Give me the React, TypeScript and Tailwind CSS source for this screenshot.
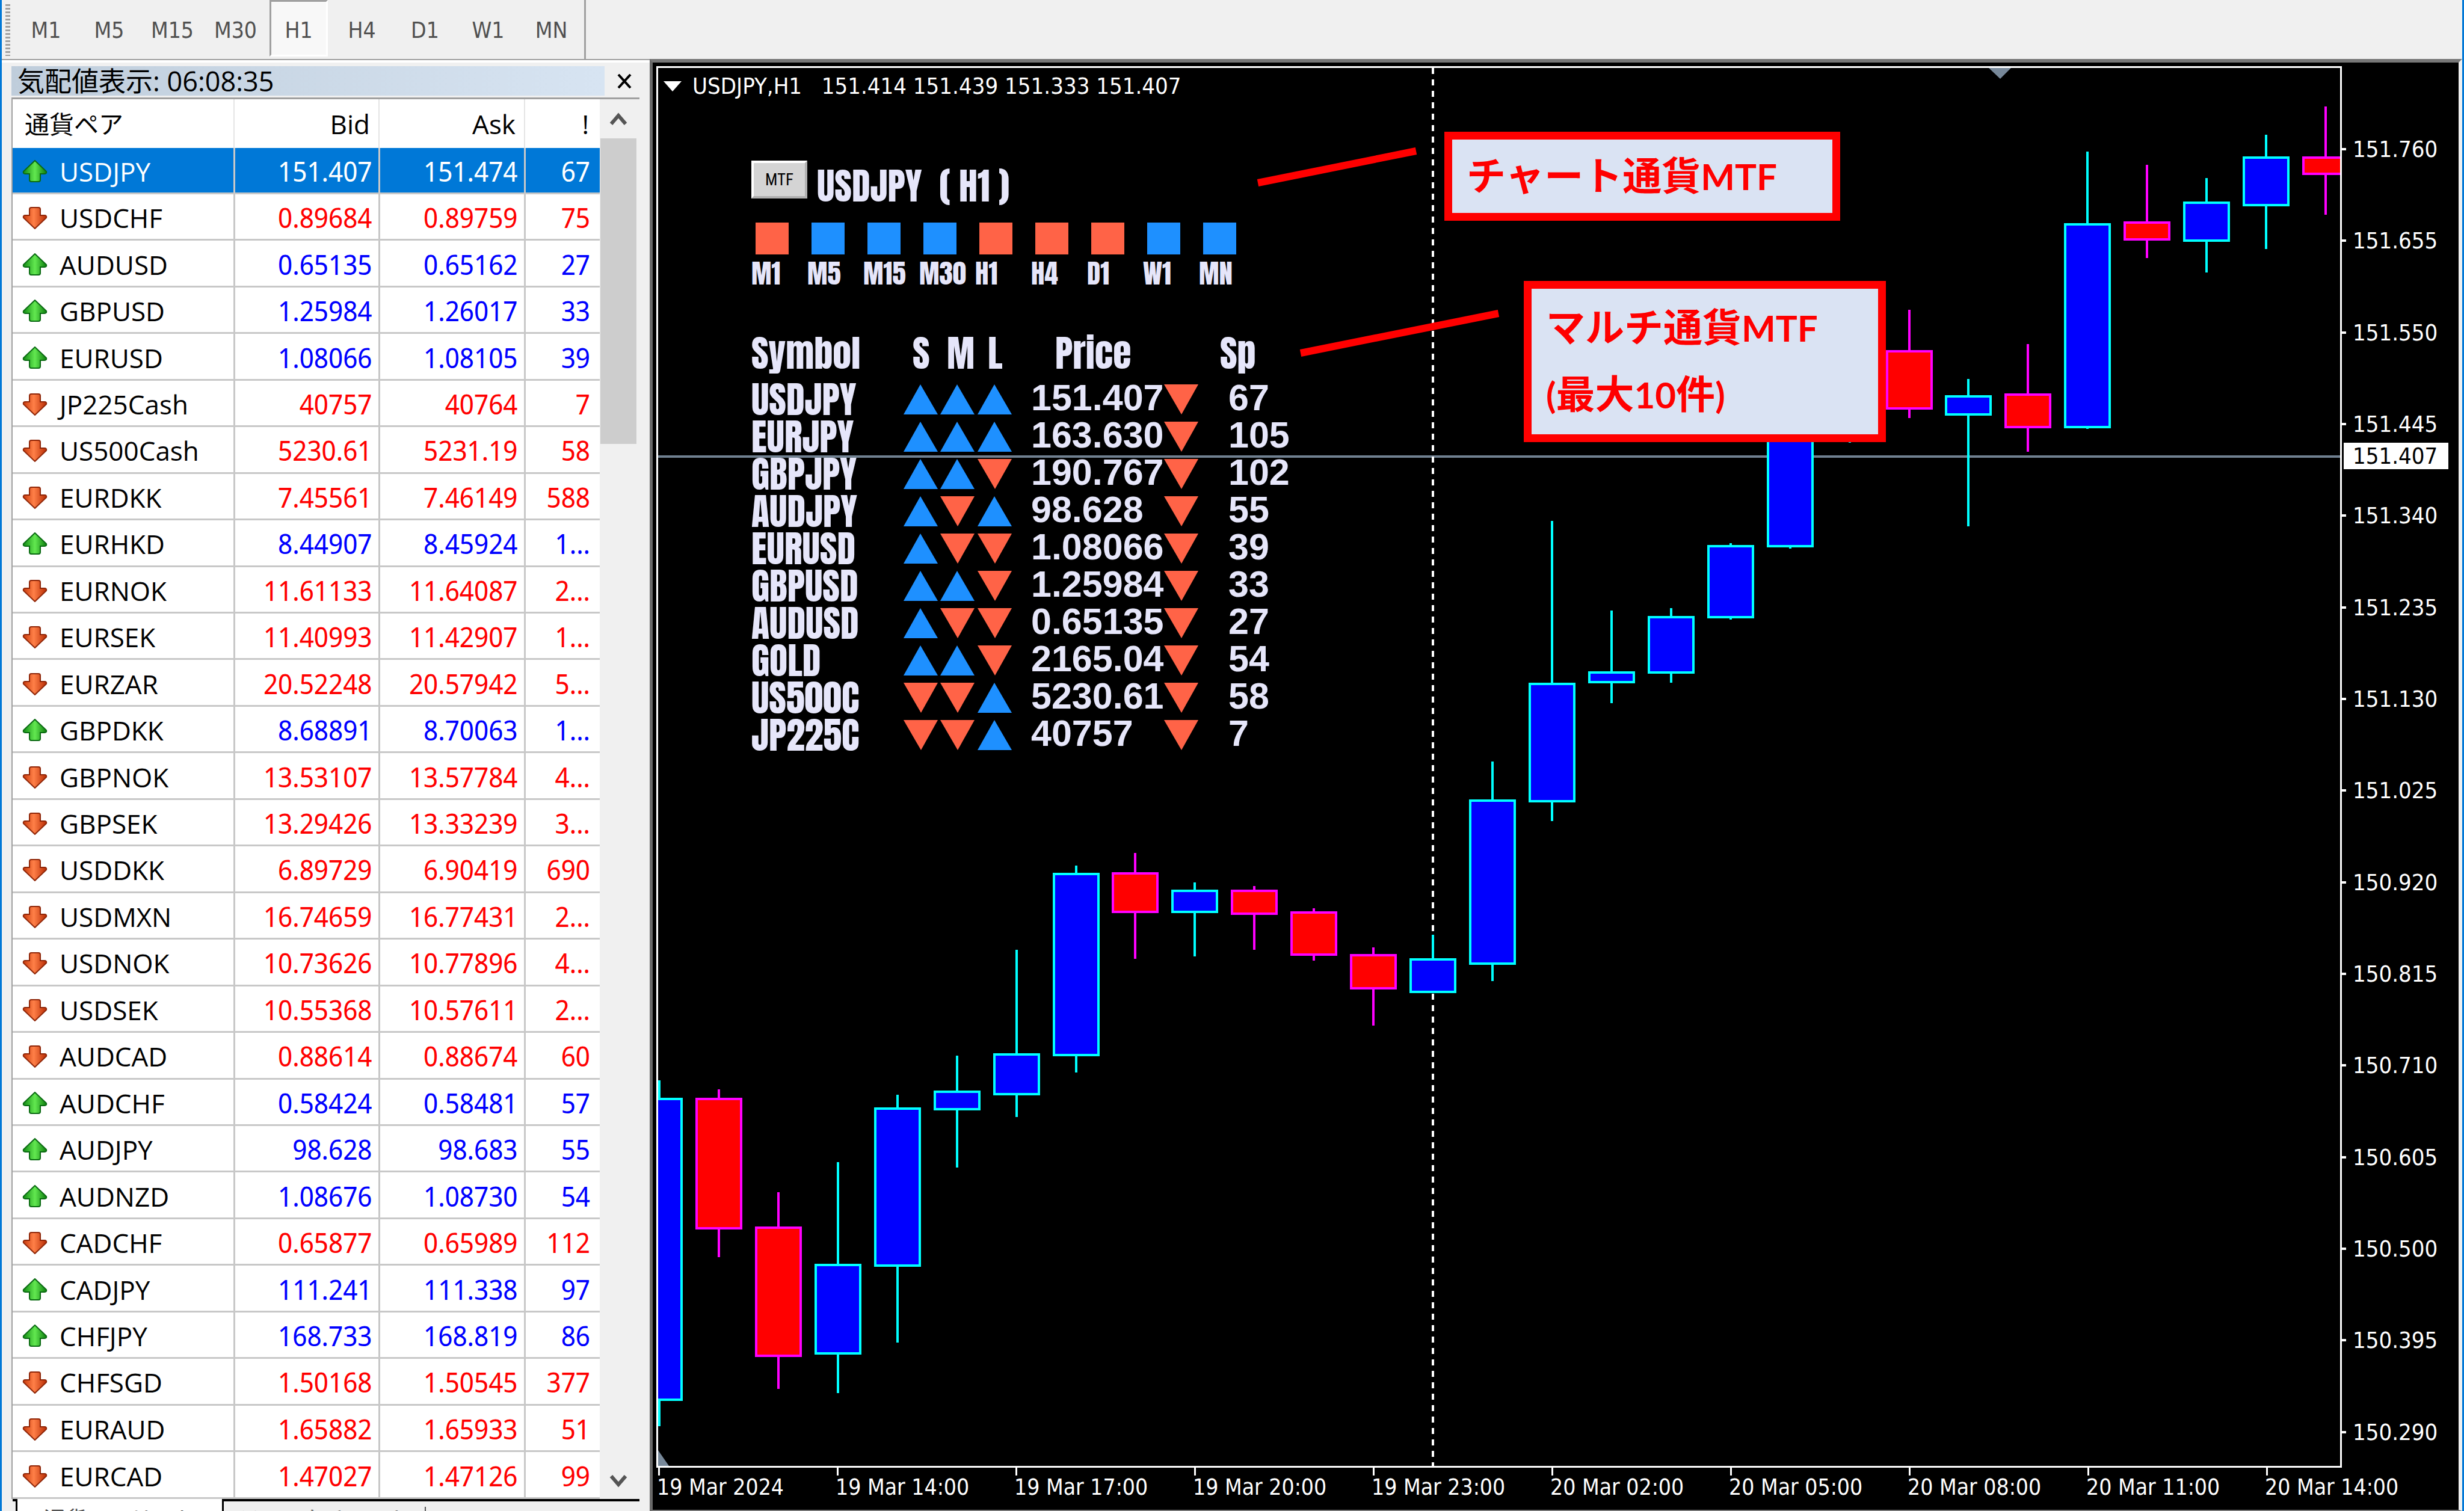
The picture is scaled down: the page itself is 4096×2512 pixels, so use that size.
import React from 'react';
import clsx from 'clsx';

type Dir = 'up' | 'down';

const TIMEFRAMES = ['M1', 'M5', 'M15', 'M30', 'H1', 'H4', 'D1', 'W1', 'MN'];

// symbol, bid, ask, spread, last tick direction
const QUOTES: [string, string, string, string, Dir][] = [
  ['USDJPY', '151.407', '151.474', '67', 'up'],
  ['USDCHF', '0.89684', '0.89759', '75', 'down'],
  ['AUDUSD', '0.65135', '0.65162', '27', 'up'],
  ['GBPUSD', '1.25984', '1.26017', '33', 'up'],
  ['EURUSD', '1.08066', '1.08105', '39', 'up'],
  ['JP225Cash', '40757', '40764', '7', 'down'],
  ['US500Cash', '5230.61', '5231.19', '58', 'down'],
  ['EURDKK', '7.45561', '7.46149', '588', 'down'],
  ['EURHKD', '8.44907', '8.45924', '1...', 'up'],
  ['EURNOK', '11.61133', '11.64087', '2...', 'down'],
  ['EURSEK', '11.40993', '11.42907', '1...', 'down'],
  ['EURZAR', '20.52248', '20.57942', '5...', 'down'],
  ['GBPDKK', '8.68891', '8.70063', '1...', 'up'],
  ['GBPNOK', '13.53107', '13.57784', '4...', 'down'],
  ['GBPSEK', '13.29426', '13.33239', '3...', 'down'],
  ['USDDKK', '6.89729', '6.90419', '690', 'down'],
  ['USDMXN', '16.74659', '16.77431', '2...', 'down'],
  ['USDNOK', '10.73626', '10.77896', '4...', 'down'],
  ['USDSEK', '10.55368', '10.57611', '2...', 'down'],
  ['AUDCAD', '0.88614', '0.88674', '60', 'down'],
  ['AUDCHF', '0.58424', '0.58481', '57', 'up'],
  ['AUDJPY', '98.628', '98.683', '55', 'up'],
  ['AUDNZD', '1.08676', '1.08730', '54', 'up'],
  ['CADCHF', '0.65877', '0.65989', '112', 'down'],
  ['CADJPY', '111.241', '111.338', '97', 'up'],
  ['CHFJPY', '168.733', '168.819', '86', 'up'],
  ['CHFSGD', '1.50168', '1.50545', '377', 'down'],
  ['EURAUD', '1.65882', '1.65933', '51', 'down'],
  ['EURCAD', '1.47027', '1.47126', '99', 'down'],
];

// wick top, body top, body bottom, wick bottom, direction
const CANDLES: [number, number, number, number, Dir][] = [
  [1796, 1827, 2327, 2371, 'up'],
  [1811, 1827, 2042, 2090, 'down'],
  [1982, 2041, 2254, 2309, 'down'],
  [1932, 2103, 2250, 2316, 'up'],
  [1820, 1843, 2104, 2232, 'up'],
  [1755, 1815, 1844, 1941, 'up'],
  [1579, 1753, 1819, 1857, 'up'],
  [1439, 1453, 1754, 1783, 'up'],
  [1418, 1452, 1516, 1594, 'down'],
  [1467, 1481, 1516, 1590, 'up'],
  [1473, 1481, 1519, 1579, 'down'],
  [1510, 1517, 1587, 1597, 'down'],
  [1575, 1588, 1643, 1705, 'down'],
  [1554, 1595, 1649, 1650, 'up'],
  [1266, 1331, 1602, 1631, 'up'],
  [866, 1137, 1332, 1365, 'up'],
  [1015, 1118, 1134, 1169, 'up'],
  [1011, 1026, 1118, 1135, 'up'],
  [903, 908, 1026, 1030, 'up'],
  [600, 620, 908, 912, 'up'],
  [560, 600, 640, 736, 'up'],
  [515, 584, 679, 695, 'down'],
  [630, 659, 689, 875, 'up'],
  [572, 656, 710, 751, 'down'],
  [252, 373, 710, 713, 'up'],
  [274, 370, 398, 429, 'down'],
  [296, 337, 400, 453, 'up'],
  [224, 262, 341, 414, 'up'],
  [177, 262, 289, 357, 'down'],
];

const PRICES = [
  '151.760', '151.655', '151.550', '151.445', '151.340', '151.235', '151.130', '151.025',
  '150.920', '150.815', '150.710', '150.605', '150.500', '150.395', '150.290',
];

const TIMES = [
  '19 Mar 2024', '19 Mar 14:00', '19 Mar 17:00', '19 Mar 20:00', '19 Mar 23:00',
  '20 Mar 02:00', '20 Mar 05:00', '20 Mar 08:00', '20 Mar 11:00', '20 Mar 14:00',
];

const TREND: Dir[] = ['down', 'up', 'up', 'up', 'down', 'down', 'down', 'up', 'up'];

// symbol, short / middle / long trend, price, spread
const MTF_ROWS: [string, Dir, Dir, Dir, string, string][] = [
  ['USDJPY', 'up', 'up', 'up', '151.407', '67'],
  ['EURJPY', 'up', 'up', 'up', '163.630', '105'],
  ['GBPJPY', 'up', 'up', 'down', '190.767', '102'],
  ['AUDJPY', 'up', 'down', 'up', '98.628', '55'],
  ['EURUSD', 'up', 'down', 'down', '1.08066', '39'],
  ['GBPUSD', 'up', 'up', 'down', '1.25984', '33'],
  ['AUDUSD', 'up', 'down', 'down', '0.65135', '27'],
  ['GOLD', 'up', 'up', 'down', '2165.04', '54'],
  ['US500C', 'down', 'down', 'up', '5230.61', '58'],
  ['JP225C', 'down', 'down', 'up', '40757', '7'],
];

export default function App() {
  return (
    <div className="flex h-screen flex-col overflow-hidden border-x-[3px] border-[#0078d7] bg-[#f0f0f0] text-black">
      <Toolbar />
      <main className="flex min-h-0 flex-1">
        <MarketWatch />
        <Chart />
      </main>
    </div>
  );
}

const Toolbar = () => (
  <nav className="flex h-[98px] shrink-0 pl-[6px] font-['DejaVu_Sans_Condensed','DejaVu_Sans',sans-serif]">
    <div className="mt-[7px] h-[86px] w-[8px] bg-[repeating-linear-gradient(#a0a0a0_0_3px,#f0f0f0_3px_6px)]" />
    <div className="flex w-[957px] border-r-[3px] border-[#a0a0a0] pl-[7px]">
      {TIMEFRAMES.map((tf) => (
        <button
          key={tf}
          className={clsx(
            'mx-1 h-[94px] w-[97px] border-[3px] pt-[8px] text-[37px] text-[#505050]',
            tf === 'H1'
              ? 'border-t-[#a0a0a0] border-r-white border-b-white border-l-[#a0a0a0] bg-[#f8f8f8]'
              : 'border-transparent',
          )}
        >
          {tf}
        </button>
      ))}
    </div>
  </nav>
);

const MarketWatch = () => (
  <aside className="flex w-[1077px] shrink-0 flex-col border-t-[2px] border-[#a0a0a0] font-['Open_Sans','Noto_Sans_CJK_JP',sans-serif]">
    <div className="h-[4px] shrink-0 bg-white" />
    <div className="mt-[6px] flex h-[49px] shrink-0 items-center pl-[16px]">
      <h2 className="flex h-full w-[986px] items-center bg-linear-to-r from-[#bfcddb] to-[#d7e4f2] pl-[10px] text-[45px] leading-none">
        気配値表示: 06:08:35
      </h2>
      <button aria-label="close" className="ml-[20px]">
        <svg width="26" height="24" viewBox="0 0 26 24">
          <path d="M3 1 L23 23 M23 1 L3 23" stroke="#000" strokeWidth="4" />
        </svg>
      </button>
    </div>
    <div className="mt-[3px] mr-[17px] ml-[16px] flex min-h-0 flex-1 border-t-[3px] border-l-[2px] border-[#a0a0a0]">
      <QuoteTable />
      <ScrollBar />
    </div>
    <Tabs />
  </aside>
);

const QuoteTable = () => (
  <table className="h-full w-[976px] table-fixed border-collapse bg-white text-[44px] leading-[50px]">
    <colgroup>
      <col className="w-[368px]" />
      <col className="w-[241px]" />
      <col className="w-[242px]" />
      <col className="w-[125px]" />
    </colgroup>
    <thead>
      <tr className="h-[81px] text-right">
        <th className="border-r-[2px] border-[#e5e5e5] pl-[20px] text-left text-[41px] font-normal">
          通貨ペア
        </th>
        <th className="border-r-[2px] border-[#e5e5e5] pr-[14px] font-normal">Bid</th>
        <th className="border-r-[2px] border-[#e5e5e5] pr-[14px] font-normal">Ask</th>
        <th className="pr-[18px] font-normal">!</th>
      </tr>
    </thead>
    <tbody>
      {QUOTES.map(([symbol, bid, ask, spread, dir], i) => (
        <tr
          key={symbol}
          className={clsx(
            'border-b-[3px] border-[#c8c8c8] text-right',
            i === 0 && 'bg-[#0078d7] text-white',
            i > 0 && dir === 'up' && 'text-[#0000ff]',
            i > 0 && dir === 'down' && 'text-[#ff0000]',
          )}
        >
          <td className="border-r-[3px] border-[#c8c8c8] px-0 pt-[4px] pb-0 text-left">
            <div className={clsx('flex items-center gap-[20px] pl-[16px]', i > 0 && 'text-black')}>
              <TickArrow dir={dir} />
              {symbol}
            </div>
          </td>
          <Num className="border-r-[3px] border-[#c8c8c8] pr-[10px]">{bid}</Num>
          <Num className="border-r-[3px] border-[#c8c8c8] pr-[10px]">{ask}</Num>
          <Num className="pr-[16px]">{spread}</Num>
        </tr>
      ))}
    </tbody>
  </table>
);

const Num = ({ className, children }: { className: string; children: string }) => (
  <td
    className={clsx(
      "pt-[4px] pb-0 pl-0 font-['Noto_Sans_Display','Noto_Sans',sans-serif] text-[45px]",
      className,
    )}
  >
    {children}
  </td>
);

function TickArrow({ dir }: { dir: Dir }) {
  return (
    <svg width="42" height="38" viewBox="0 0 42 38" className="shrink-0">
      <defs>
        <linearGradient id="tick-up" x1="0" x2="1">
          <stop offset="0" stopColor="#138a13" />
          <stop offset="0.5" stopColor="#62e850" />
          <stop offset="1" stopColor="#0c7d0c" />
        </linearGradient>
        <linearGradient id="tick-down" x1="0" x2="1">
          <stop offset="0" stopColor="#c83a0c" />
          <stop offset="0.45" stopColor="#ff8048" />
          <stop offset="1" stopColor="#b82c04" />
        </linearGradient>
      </defs>
      {dir === 'up' ? (
        <path
          d="M21 1 L40 19 Q41 23 37 23 L30 23 L30 33 Q30 36 27 36 L15 36 Q12 36 12 33 L12 23 L5 23 Q1 23 2 19 Z"
          fill="url(#tick-up)"
          stroke="#0a6a12"
          strokeWidth="2"
        />
      ) : (
        <path
          d="M21 37 L40 19 Q41 15 37 15 L30 15 L30 5 Q30 2 27 2 L15 2 Q12 2 12 5 L12 15 L5 15 Q1 15 2 19 Z"
          fill="url(#tick-down)"
          stroke="#8f2608"
          strokeWidth="2"
        />
      )}
    </svg>
  );
}

const ScrollBar = () => (
  <div className="ml-[1px] flex w-[60px] flex-col items-center">
    <button aria-label="scroll up" className="flex h-[65px] items-center">
      <svg width="30" height="22" viewBox="0 0 30 22">
        <path d="M3 19 L15 5 L27 19" fill="none" stroke="#555" strokeWidth="6" />
      </svg>
    </button>
    <div className="h-[508px] w-full bg-[#cdcdcd]" />
    <button aria-label="scroll down" className="mt-auto flex h-[60px] items-center">
      <svg width="30" height="22" viewBox="0 0 30 22">
        <path d="M3 3 L15 17 L27 3" fill="none" stroke="#555" strokeWidth="6" />
      </svg>
    </button>
  </div>
);

const Tabs = () => (
  <div className="mr-[17px] ml-[18px] flex h-[20px] shrink-0 overflow-hidden text-[36px] leading-[40px]">
    <div className="w-[8px] border-t-[4px] border-r-[3px] border-black" />
    <button className="w-[340px] shrink-0 bg-white pt-[14px] text-[#555]">通貨ペアリスト</button>
    <div className="flex flex-1 border-t-[4px] border-l-[3px] border-black">
      <button className="w-[334px] shrink-0 pt-[10px] text-[#777]">ティックチャート</button>
      <div className="mt-[9px] h-[10px] w-[2px] bg-[#555]" />
    </div>
  </div>
);

const Chart = () => (
  <section className="relative min-w-0 flex-1 border-t-[6px] border-r-[6px] border-b-[2px] border-l-[5px] border-t-[#777] border-r-[#f0f0f0] border-b-[#777] border-l-[#696969] bg-black font-['DejaVu_Sans_Condensed','DejaVu_Sans',sans-serif] text-[38px] leading-[40px] text-white">
    <div className="grid h-full grid-cols-[minmax(0,1fr)_194px] grid-rows-[minmax(0,1fr)_70px] pt-[6px] pl-[6px]">
      <div className="min-h-0 border-[3px] border-white">
        <Plot />
      </div>
      <PriceAxis />
      <div className="col-span-2 flex overflow-hidden pl-[1px] text-[37px]">
        {TIMES.map((time) => (
          <div key={time} className="w-[297px] shrink-0">
            <div className="ml-[2px] h-[13px] w-[3px] bg-white" />
            <div className="whitespace-nowrap">{time}</div>
          </div>
        ))}
      </div>
    </div>
    <div className="absolute top-[19px] left-[18px] flex items-center gap-[18px] whitespace-pre">
      <svg width="30" height="17" viewBox="0 0 30 17">
        <path d="M0 0 H30 L15 17 Z" fill="#fff" />
      </svg>
      <span>USDJPY,H1   151.414 151.439 151.333 151.407</span>
    </div>
    <MtfPanel />
    <div className="absolute top-[115px] left-[1316px] h-[148px] w-[658px] border-[13px] border-[#ff0000] bg-[#dae3f3] pt-[3px] pl-[24px] font-['Noto_Sans_CJK_JP',sans-serif] text-[65px] leading-[106px] font-bold text-[#ff0000]">
      チャート通貨<Latin>MTF</Latin>
    </div>
    <div className="absolute top-[363px] left-[1448px] h-[268px] w-[602px] border-[13px] border-[#ff0000] bg-[#dae3f3] pt-[5px] pl-[24px] font-['Noto_Sans_CJK_JP',sans-serif] text-[65px] leading-[111px] font-bold text-[#ff0000]">
      マルチ通貨<Latin>MTF</Latin>
      <br />
      <Latin>(</Latin>最大<Latin>10</Latin>件<Latin>)</Latin>
    </div>
  </section>
);

const Latin = ({ children }: { children: React.ReactNode }) => (
  <span className="font-['Lato',sans-serif] text-[60px] leading-none">{children}</span>
);

const Plot = () => (
  <svg className="block h-full w-full" viewBox="1094 113 2796 2324" preserveAspectRatio="none">
    <path d="M1094 759 H3890" stroke="#708090" strokeWidth="4" />
    <path d="M2382 113 V2437" stroke="#fff" strokeWidth="4" strokeDasharray="10 9" />
    {CANDLES.map(([high, top, bottom, low, dir], i) => {
      const x = 1096 + Math.round(i * 98.93);
      const line = dir === 'up' ? '#00ffff' : '#ff00ff';
      return (
        <g key={i} stroke={line} strokeWidth="4">
          <path d={`M${x} ${high} V${low}`} />
          <rect
            x={x - 37}
            y={top}
            width="74"
            height={bottom - top}
            fill={dir === 'up' ? '#0000ff' : '#ff0000'}
          />
        </g>
      );
    })}
    <path d="M3306 113 H3343 L3325 131 Z" fill="#778899" />
    <path d="M1094 2411 L1112 2437 H1094 Z" fill="#778899" />
    <path d="M2091 304 L2354 251 M2162 587 L2491 521" stroke="#ff0000" strokeWidth="12" />
  </svg>
);

const PriceAxis = () => (
  <div className="relative flex flex-col justify-between pt-[118px] pb-[39px]">
    {PRICES.map((price) => (
      <div key={price} className="flex items-center gap-[11px]">
        <div className="h-[4px] w-[7px] bg-white" />
        {price}
      </div>
    ))}
    <div className="absolute top-[626px] left-[3px] h-[44px] w-[174px] bg-white pl-[15px] leading-[44px] text-black">
      151.407
    </div>
  </div>
);

const MtfPanel = () => (
  <div className="absolute top-[163px] left-[164px] w-[930px] font-['Anton','Roboto_Condensed',sans-serif] text-[#e6e6fa]">
    <div className="flex items-start gap-[16px]">
      <button className="h-[63px] w-[93px] border-[4px] border-t-white border-r-[#b0b0b0] border-b-[#b0b0b0] border-l-white bg-[#d4d4d4] font-['Roboto_Condensed',sans-serif] text-[27px] text-black">
        MTF
      </button>
      <h1 className="pt-[12px] text-[62px] leading-[60px] whitespace-pre">USDJPY  ( H1 )</h1>
    </div>
    <div className="mt-[31px] flex">
      {TIMEFRAMES.map((tf, i) => (
        <div key={tf} className="w-[93px] shrink-0">
          <div
            className={clsx(
              'ml-[7px] h-[53px] w-[55px]',
              TREND[i] === 'up' ? 'bg-[#1e90ff]' : 'bg-[#ff6347]',
            )}
          />
          <div className="mt-[4px] text-[45px] leading-[54px]">{tf}</div>
        </div>
      ))}
    </div>
    <table className="mt-[59px] w-full table-fixed border-collapse text-left text-[62px] leading-[62px]">
      <colgroup>
        <col className="w-[253px]" />
        <col className="w-[61px]" />
        <col className="w-[62px]" />
        <col className="w-[89px]" />
        <col className="w-[221px]" />
        <col className="w-[107px]" />
        <col />
      </colgroup>
      <thead>
        <tr className="h-[93px] leading-[93px]">
          <th className="p-0 font-normal">Symbol</th>
          <th className="py-0 pl-[15px] font-normal">S</th>
          <th className="py-0 pl-[11px] font-normal">M</th>
          <th className="py-0 pl-[17px] font-normal">L</th>
          <th className="py-0 pl-[40px] font-normal">Price</th>
          <th colSpan={2} className="py-0 pl-[93px] font-normal">Sp</th>
        </tr>
      </thead>
      <tbody>
        {MTF_ROWS.map(([symbol, s, m, l, price, spread]) => (
          <tr key={symbol} className="h-[62px]">
            <td className="p-0">{symbol}</td>
            <td className="p-0"><Triangle dir={s} /></td>
            <td className="p-0"><Triangle dir={m} /></td>
            <td className="p-0"><Triangle dir={l} /></td>
            <td className="p-0 font-['Liberation_Sans',sans-serif] text-[61px] font-bold">
              <div className="h-[62px] leading-[56px]">{price}</div>
            </td>
            <td className="p-0"><Triangle dir="down" /></td>
            <td className="p-0 font-['Liberation_Sans',sans-serif] text-[61px] font-bold">
              <div className="h-[62px] leading-[56px]">{spread}</div>
            </td>
          </tr>
        ))}
      </tbody>
    </table>
  </div>
);

const Triangle = ({ dir }: { dir: Dir }) => (
  <svg className="block" width="57" height="50" viewBox="0 0 57 50">
    {dir === 'up' ? (
      <path d="M28 0 L57 50 H0 Z" fill="#1e90ff" />
    ) : (
      <path d="M0 0 H57 L29 50 Z" fill="#ff6347" />
    )}
  </svg>
);
